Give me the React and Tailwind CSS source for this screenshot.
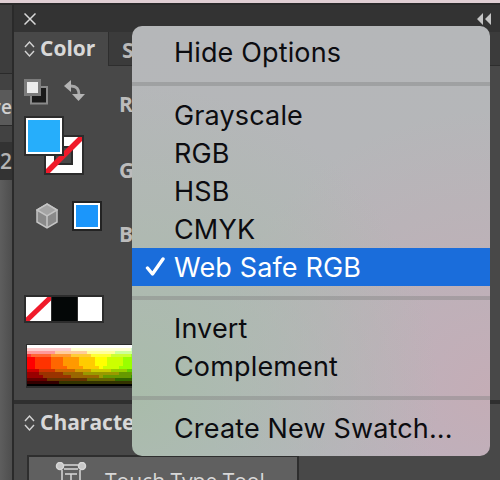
import React from 'react';

// web safe spectrum, quantised to steps of 51 like the real ramp
function spectrumCells() {
  const cells = [];
  const w = 160, h = 41, step = 4;
  for (let y = 0; y < h; y += 3) {
    for (let x = 0; x < w; x += step) {
      const hue = (x / 72) * 60;
      const v = y / h;
      const k = (n) => (n + hue / 60) % 6;
      const f = (n) => 1 - Math.max(0, Math.min(k(n), 4 - k(n), 1));
      let c = [f(5), f(3), f(1)];
      if (v < 0.3) {
        const t = 1 - v / 0.3;
        c = c.map((a) => a + (1 - a) * t);
      } else if (v > 0.48) {
        const t = 1 - (v - 0.48) / 0.52;
        c = c.map((a) => a * t);
      }
      const q = c.map((a) => Math.round((a * 255) / 51) * 51);
      cells.push(<rect key={x + '-' + y} x={x} y={y} width={step} height={3} fill={`rgb(${q[0]},${q[1]},${q[2]})`} />);
    }
  }
  return cells;
}

function Updown() {
  return (
    <svg width="11" height="18" viewBox="0 0 11 18" fill="none" stroke="#d4d4d4" strokeWidth="1.4">
      <path d="M1 7 L5.5 2 L10 7" />
      <path d="M1 11 L5.5 16 L10 11" />
    </svg>
  );
}

function MenuRow({ label, selected }) {
  return (
    <div className={`relative flex h-[38px] items-center pl-[42px] ${selected ? 'bg-[#1a6ddb] text-white' : 'text-[#0c0c10]'}`}>
      {selected && (
        <svg className="absolute left-[13px] top-[8px]" width="20" height="21" viewBox="0 0 20 21" fill="none" stroke="white" strokeWidth="3.4" strokeLinecap="round" strokeLinejoin="round">
          <path d="M2.5 12 L7.5 18 L18 3" />
        </svg>
      )}
      {label}
    </div>
  );
}

function MenuSep({ top, bottom }) {
  return <div className={`h-1 bg-[#7f7f80]/40 ${top} ${bottom}`} />;
}

export default function App() {
  return (
    <div className="relative flex h-[480px] w-[500px] flex-col overflow-hidden bg-[#333333] font-['Open_Sans',sans-serif]">
      <div className="h-[3px] bg-[#e0cfd4]" />
      <div className="h-[2px] bg-[#2a2a2a]" />
      <div className="flex flex-1 overflow-hidden">
        {/* neighbouring dock, cut off at the window edge */}
        <div className="flex w-[12px] flex-col bg-[#565656]">
          <div className="h-[68px] bg-[#3d3d3d]" />
          <div className="h-px bg-[#2a2a2a]" />
          <div className="h-[16px] bg-[#424242]" />
          <div className="flex h-[35px] items-center justify-end overflow-hidden bg-[#5a5a5a] text-[19px] font-semibold leading-none text-[#d0d0d0]">re</div>
          <div className="h-px bg-[#2a2a2a]" />
          <div className="h-[16px] bg-[#424242]" />
          <div className="flex h-[38px] items-center justify-end overflow-hidden bg-[#333333] text-[21px] font-semibold leading-none text-[#b4b4b4]">2</div>
          <div className="flex-1 bg-gradient-to-r from-[#5e5e5e] to-[#4e4e4e]" />
        </div>
        <div className="flex flex-1 flex-col border-l-2 border-[#2a2a2a] bg-[#484848]">
          <div className="flex h-[27px] shrink-0 items-center justify-between bg-[#333333] pl-[10px] pr-[9px]">
            <svg width="12" height="12" viewBox="0 0 12 12" stroke="#d8d8d8" strokeWidth="1.5"><path d="M0.5 0.5 L11.5 11.5 M11.5 0.5 L0.5 11.5" /></svg>
            <svg width="14" height="12" viewBox="0 0 14 12" fill="#c4c4c4"><path d="M6 0 V12 L0 6 Z M14 0 V12 L8 6 Z" /></svg>
          </div>
          <div className="flex h-[34px] shrink-0">
            <div className="flex w-[94px] items-center gap-[5px] bg-[#484848] pl-[10px] text-[21px] font-bold text-[#d8d8d8]">
              <Updown />
              Color
            </div>
            <div className="flex-1 border-b border-l border-[#2e2e2e] bg-[#3b3b3b] pl-[13px] pt-[3px] text-[21px] font-bold text-[#b8b8b8]">S</div>
          </div>
          {/* color panel body */}
          <div className="flex h-[338px] shrink-0 border-b-4 border-[#2f2f2f] pl-[10px]">
            <div className="flex w-[95px] shrink-0 flex-col">
              <div className="mt-[13px] flex items-start gap-[16px]">
                <svg width="24" height="26" viewBox="0 0 24 26">
                  <rect x="7" y="8" width="16" height="16.5" fill="#1a1a1a" stroke="#8a8a8a" strokeWidth="2" />
                  <rect x="1.5" y="1.5" width="14" height="14" fill="#ececec" stroke="#7c7c7c" strokeWidth="3" />
                </svg>
                <svg className="mt-[1px]" width="22" height="22" viewBox="0 0 22 22">
                  <path d="M7 6 C13 6 15 9 15 15" fill="none" stroke="#a8a8a8" strokeWidth="3" />
                  <path d="M0 6 L7 0 V12 Z" fill="#b4b4b4" />
                  <path d="M8 14 H21 L14.5 21 Z" fill="#b4b4b4" />
                </svg>
              </div>
              <div className="relative mt-[11px] h-[60px] w-[60px]">
                <div className="absolute left-[20px] top-[19px] h-[40px] w-[40px] overflow-hidden border-2 border-[#2c2c2c] bg-white">
                  <svg width="36" height="36" viewBox="0 0 36 36">
                    <rect x="9" y="10" width="17" height="17" fill="#484848" stroke="#2c2c2c" strokeWidth="2" />
                    <path d="M0 36 L36 0" stroke="#f01a2a" strokeWidth="5.5" />
                  </svg>
                </div>
                <div className="absolute left-0 top-0 h-[40px] w-[40px] border-2 border-[#2c2c2c] bg-[#26aefb]">
                  <div className="h-full w-full border-[2px] border-white" />
                </div>
              </div>
              <div className="ml-[12px] mt-[25px] flex items-center gap-[14px]">
                <svg width="22" height="26" viewBox="0 0 22 26">
                  <path d="M11 1 L21 7 V19 L11 25 L1 19 V7 Z" fill="#8a8a8a" stroke="#c4c4c4" strokeWidth="1.5" />
                  <path d="M1 7 L11 13 L21 7 L11 1 Z" fill="#a4a4a4" stroke="#c4c4c4" strokeWidth="1.5" />
                  <path d="M11 13 V25" stroke="#c4c4c4" strokeWidth="1.5" />
                </svg>
                <div className="h-[30px] w-[30px] border-2 border-[#232323] bg-white p-[2px]">
                  <div className="h-full w-full bg-[#1b96fb]" />
                </div>
              </div>
              <div className="mt-[64px] flex h-[28px] w-[80px] shrink-0 border-2 border-[#2c2c2c] bg-[#2c2c2c]">
                <svg className="mr-[1px] bg-white" width="25" height="24" viewBox="0 0 25 24"><path d="M0 24 L25 0" stroke="#f01a2a" strokeWidth="5" /></svg>
                <div className="mr-[1px] w-[25px] bg-[#040707]" />
                <div className="flex-1 bg-white" />
              </div>
              <div className="ml-[2px] mt-[21px] h-[44px] w-[160px] shrink-0 overflow-hidden border border-b-2 border-[#2c2c2c]">
                <svg width="160" height="41" viewBox="0 0 160 41" shapeRendering="crispEdges">{spectrumCells()}</svg>
              </div>
            </div>
            {/* channel labels, the sliders sit behind the menu */}
            <div className="flex flex-col text-[21px] font-bold leading-none text-[#bcbcbc]">
              <div className="mt-[28px]">R</div>
              <div className="mt-[45px]">G</div>
              <div className="mt-[43px]">B</div>
            </div>
          </div>
          {/* character panel */}
          <div className="flex flex-1 flex-col pl-[10px]">
            <div className="flex h-[37px] shrink-0 items-center gap-[5px] text-[21px] font-bold text-[#d8d8d8]">
              <Updown />
              Character
            </div>
            <div className="ml-[3px] mt-[14px] flex h-[40px] w-[272px] shrink-0 gap-[18px] border-2 border-[#2e2e2e] bg-[#606060] pl-[26px] pt-[5px] text-[21px] leading-[38px] text-[#d8d8d8]">
              <svg className="shrink-0" width="32" height="30" viewBox="0 0 32 30" fill="none" stroke="#d8d8d8" strokeWidth="1.5">
                <circle cx="5" cy="4" r="3.5" fill="#c8c8c8" />
                <circle cx="27" cy="4" r="3.5" fill="#c8c8c8" />
                <path d="M9 3 H23 M9 7 H23 M7 8 V28 M25 8 V28" />
                <path d="M10 12 H22 M16 12 V24" />
              </svg>
              Touch Type Tool
            </div>
          </div>
        </div>
      </div>

      {/* options menu floating over the panel */}
      <div className="absolute left-[132px] top-[26px] h-[430px] w-[358px] overflow-hidden rounded-[10px] bg-[#b6b7b9] bg-[radial-gradient(circle_at_0%_85%,#a9bcaa_0%,rgba(169,188,170,0)_60%),radial-gradient(circle_at_100%_85%,#c4adb6_0%,rgba(196,173,182,0)_55%),linear-gradient(to_bottom,#b5b7b9_0%,#b5b6b9_50%,#b6b6c6_100%)] pt-[7px] font-['Inter',sans-serif] text-[27px] leading-none tracking-[0.15px]">
        <MenuRow label="Hide Options" />
        <MenuSep top="mt-[11px]" bottom="mb-[10px]" />
        <MenuRow label="Grayscale" />
        <MenuRow label="RGB" />
        <MenuRow label="HSB" />
        <MenuRow label="CMYK" />
        <MenuRow label="Web Safe RGB" selected />
        <MenuSep top="mt-[10px]" bottom="mb-[9px]" />
        <MenuRow label="Invert" />
        <MenuRow label="Complement" />
        <MenuSep top="mt-[11px]" bottom="mb-[9px]" />
        <MenuRow label="Create New Swatch..." />
      </div>
    </div>
  );
}
